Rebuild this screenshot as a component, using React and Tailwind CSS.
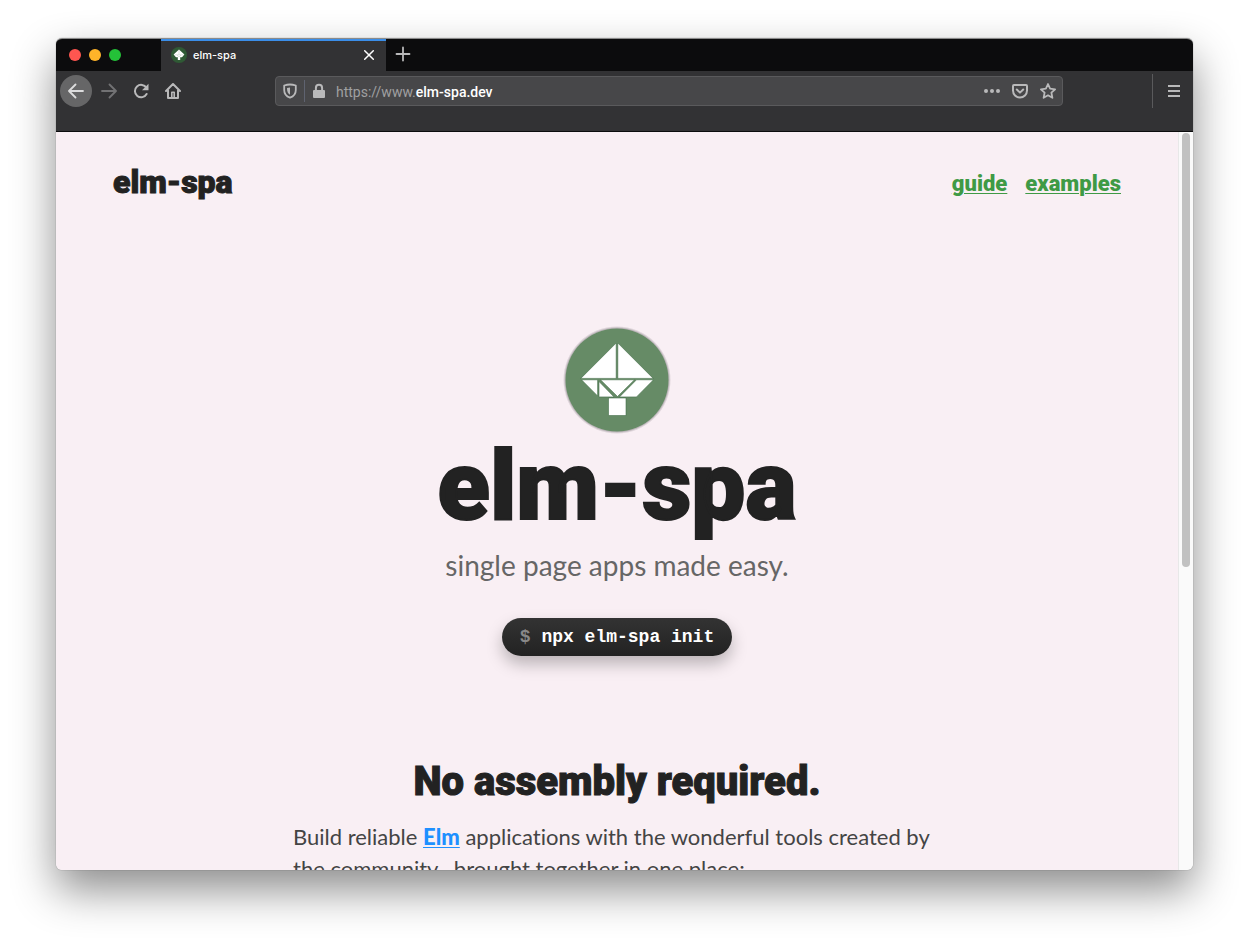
import React from "react";

function ToolIcon({ children, size = 16, className = "" }) {
  return (
    <svg
      width={size}
      height={size}
      viewBox="0 0 16 16"
      fill="none"
      stroke="currentColor"
      strokeWidth="2"
      strokeLinecap="round"
      strokeLinejoin="round"
      aria-hidden="true"
      className={className}
    >
      {children}
    </svg>
  );
}

function TreeShapes() {
  return (
    <g fill="#fff" stroke="#3f6a45" strokeOpacity="0.7" strokeWidth="0.8">
      <path d="M51.200 15v35.400H15.800z" />
      <path d="M52.800 15v35.400h35.400z" />
      <path d="M16.500 51.800H32.600v16.100z" />
      <path d="M34 53.500 49 68.900H34z" />
      <path d="M35.500 51.800h34L52.500 68.500z" />
      <path d="M71.500 51.800h17L71.500 68.900H54.500z" />
      <path d="M43.500 70h17.500v17.500H43.500z" />
    </g>
  );
}

function TabStrip() {
  return (
    <div className="flex h-8 bg-[#0c0c0d]">
      <div className="flex w-[105px] items-center gap-2 pl-[13px]">
        <button aria-label="Close window" className="size-3 rounded-full bg-[#ff5650]" />
        <button aria-label="Minimize window" className="size-3 rounded-full bg-[#ffb429]" />
        <button aria-label="Zoom window" className="size-3 rounded-full bg-[#24c138]" />
      </div>
      <div className="flex w-[225px] items-center bg-[#323234] pr-[11px] pl-[10px] text-white shadow-[inset_0_2px_0_#3b8ee8]">
        <svg width="16" height="16" viewBox="0 0 16 16" aria-hidden="true">
          <circle cx="8" cy="8" r="8" fill="#2f5a35" />
          <path
            d="M8 2.500 13.400 7.600 11 10.300H9.200V13H6.800v-2.700H5L2.600 7.600z"
            fill="#fff"
          />
          <path d="M8 3v4.500M3.500 7.800h9M6 8l2 2 2-2" fill="none" stroke="#2f5a35" strokeOpacity="0.25" strokeWidth="0.600" />
        </svg>
        <span className="ml-1.5 flex-1 text-[11px] leading-4 font-medium">elm-spa</span>
        <button aria-label="Close tab">
          <svg width="12" height="12" viewBox="0 0 12 12" stroke="currentColor" strokeWidth="1.500" strokeLinecap="round">
            <path d="M1.700 1.700l8.600 8.600M10.300 1.700l-8.600 8.600" />
          </svg>
        </button>
      </div>
      <button aria-label="New tab" className="ml-[9px] -mt-0.5 text-[#b9b9ba]">
        <svg width="16" height="16" viewBox="0 0 16 16" stroke="currentColor" strokeWidth="1.800" strokeLinecap="round">
          <path d="M8 1.500v13M1.500 8h13" />
        </svg>
      </button>
    </div>
  );
}

function Toolbar() {
  return (
    <div className="flex h-[61px] items-start border-b border-[#0c0c0d] bg-[#323234] pt-1 text-[#b9b9ba]">
      <div className="flex items-center pl-1">
        <button aria-label="Back" className="flex size-8 items-center justify-center rounded-full bg-[#666667] text-[#dcdcdd]">
          <ToolIcon>
            <path d="M15 8H1.500M7.500 1.500 1 8l6.500 6.500" strokeWidth="1.800" />
          </ToolIcon>
        </button>
        <button aria-label="Forward" className="flex w-[34px] justify-center text-[#727274]">
          <ToolIcon>
            <path d="M1 8h13.500M8.500 1.500 15 8l-6.500 6.500" strokeWidth="1.800" />
          </ToolIcon>
        </button>
        <button aria-label="Reload" className="flex w-[30px] justify-center">
          <ToolIcon>
            <path d="M13.400 4.800A6.200 6.200 0 1 0 13.600 11" />
            <path d="M15.500.800v6.400H9z" fill="currentColor" stroke="none" />
          </ToolIcon>
        </button>
        <button aria-label="Home" className="flex w-[34px] justify-center">
          <ToolIcon>
            <path d="M1 8 8 1l7 7M3 7.500V15h10V7.500" />
            <path d="M6.800 14.500V9.200h2.400v5.300" strokeWidth="1.600" />
          </ToolIcon>
        </button>
      </div>
      <div className="mt-px ml-[85px] flex h-[30px] min-w-0 flex-1 items-center rounded border border-[#5a5a5c] bg-[#474749] px-[6px]">
        <button aria-label="Tracking protection">
          <ToolIcon>
            <path d="M8 1.500C6 1.500 4 1.900 2.200 2.500V7c0 3.800 2 6.300 5.800 7.700 3.800-1.400 5.800-3.900 5.800-7.700V2.500C12 1.900 10 1.500 8 1.500z" strokeWidth="1.800" />
            <path d="M8 4.500v7.200C6 10.800 5 9 5 5z" fill="currentColor" stroke="none" />
          </ToolIcon>
        </button>
        <span className="mr-[7px] ml-[6px] h-[22px] w-px bg-[#5f6370]" />
        <button aria-label="Site information" className="-mt-px">
          <svg width="14" height="16" viewBox="0 0 14 16" aria-hidden="true">
            <path d="M3.900 8V4.900a3.100 3.100 0 0 1 6.200 0V8" fill="none" stroke="currentColor" strokeWidth="2" />
            <rect x="1" y="7" width="12" height="8" rx="1" fill="currentColor" />
          </svg>
        </button>
        <a
          href="https://www.elm-spa.dev"
          className="ml-[10px] flex-1 truncate pt-0.5 font-['Roboto',sans-serif] text-sm leading-5 text-[#a0a0a1]"
        >
          https://www.<span className="font-medium text-white">elm-spa.dev</span>
        </a>
        <div className="flex items-center gap-3">
          <button aria-label="Page actions">
            <svg width="16" height="16" viewBox="0 0 16 16" fill="currentColor">
              <circle cx="2" cy="8" r="2" />
              <circle cx="8" cy="8" r="2" />
              <circle cx="14" cy="8" r="2" />
            </svg>
          </button>
          <button aria-label="Save to Pocket">
            <ToolIcon>
              <path d="M2 2h12a1 1 0 0 1 1 1v4.500a7 7 0 0 1-14 0V3a1 1 0 0 1 1-1z" />
              <path d="M4.800 6.500 8 9.600l3.200-3.100" />
            </ToolIcon>
          </button>
          <button aria-label="Bookmark this page">
            <ToolIcon>
              <path d="m8 1 2.100 4.700 5 .6-3.700 3.400 1 5.100L8 12.300l-4.400 2.500 1-5.100L.900 6.300l5-.6z" strokeWidth="1.800" />
            </ToolIcon>
          </button>
        </div>
      </div>
      <div className="-mt-px ml-[89px] flex h-[34px] items-center border-l border-[#5a5a5c] pr-3 pl-[14px]">
        <button aria-label="Open menu">
          <svg width="14" height="16" viewBox="0 0 14 16" stroke="currentColor" strokeWidth="2">
            <path d="M1 3h12M1 8h12M1 13h12" />
          </svg>
        </button>
      </div>
    </div>
  );
}

function Site() {
  return (
    <div className="min-w-0 flex-1 bg-[#f9eff4] text-[#222]">
      <header className="flex items-center justify-between px-[57px] pt-7">
        <a
          href="#home"
          className="pb-1 font-['Roboto',sans-serif] text-[32px] leading-[44px] font-black [-webkit-text-stroke:1px_#222]"
        >
          elm-spa
        </a>
        <nav className="flex gap-[18px] font-['Roboto',sans-serif] text-[22px] leading-8 font-black text-[#3f9a45]">
          <a href="#guide" className="underline decoration-1 underline-offset-2">guide</a>
          <a href="#examples" className="underline decoration-1 underline-offset-2">examples</a>
        </nav>
      </header>
      <main className="flex flex-col items-center">
        <svg className="mt-[118px]" width="108" height="108" viewBox="-2 -2 108 108" role="img" aria-label="elm-spa logo">
          <circle cx="52" cy="52" r="53.500" fill="#000" opacity=".1" />
          <circle cx="52" cy="52" r="52.500" fill="#000" opacity=".15" />
          <circle cx="52" cy="52" r="51.500" fill="#668b66" />
          <TreeShapes />
        </svg>
        <h1 className="pb-2 font-['Roboto',sans-serif] text-[96px] leading-[104px] font-black [-webkit-text-stroke:2px_#222]">
          elm-spa
        </h1>
        <p className="-mt-px font-['Lato',sans-serif] text-[28px] leading-10 text-[#666]">
          single page apps made easy.
        </p>
        <code className="mt-[33px] rounded-full bg-[linear-gradient(#333,#222)] px-[18px] font-['Liberation_Mono',monospace] text-lg leading-[38px] font-bold text-white shadow-[0_8px_16px_rgba(0,0,0,0.25)]">
          <span className="text-[#888]">$</span> npx elm-spa init
        </code>
        <section className="mt-[98px] w-[648px] max-w-full">
          <h2 className="text-center font-['Roboto',sans-serif] text-[40px] leading-[56px] font-black [-webkit-text-stroke:1px_#222]">
            No assembly required.
          </h2>
          <p className="mt-[11px] font-['Lato',sans-serif] text-[22px] leading-8 text-[#444] [font-variant-ligatures:none]">
            Build reliable{" "}
            <a href="#elm" className="font-black text-[#1e90ff] underline decoration-1 underline-offset-2">
              Elm
            </a>{" "}
            applications with the wonderful tools created by the community,&nbsp; brought together in one place:
          </p>
        </section>
      </main>
    </div>
  );
}

export default function App() {
  return (
    <div className="flex h-screen bg-white px-14 pt-[38px] pb-[74px] font-['Inter',sans-serif]">
      <div className="flex min-w-0 flex-1 flex-col overflow-hidden rounded-md border-t border-[#8a8a8a] shadow-[0_0_1px_rgba(0,0,0,0.6),0_20px_44px_rgba(0,0,0,0.45)]">
        <TabStrip />
        <Toolbar />
        <div className="flex min-h-0 flex-1 overflow-hidden">
          <Site />
          <div className="w-[15px] border-l border-[#e8e8e8] bg-[#fafafa] pt-px pl-[3px]">
            <div className="h-[434px] w-2 rounded-full bg-[#c1c1c1]" />
          </div>
        </div>
      </div>
    </div>
  );
}
